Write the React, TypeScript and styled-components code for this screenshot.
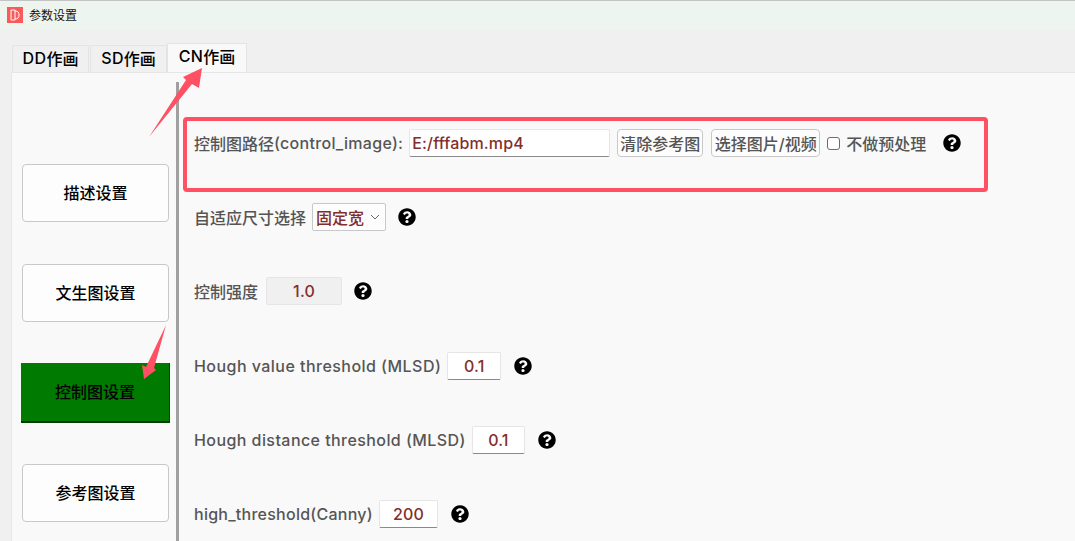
import React from "react";
import styled, { createGlobalStyle } from "styled-components";
import { FaQuestionCircle } from "react-icons/fa";

const GlobalStyle = createGlobalStyle`
  html, body {
    margin: 0;
    padding: 0;
    background: #f0f0f0;
  }
  * { box-sizing: border-box; }
`;

const FONT = `Inter, "Noto Sans CJK SC", sans-serif`;

const Page = styled.div`
  position: relative;
  width: 1075px;
  height: 541px;
  overflow: hidden;
  display: flex;
  flex-direction: column;
  font-family: ${FONT};
  background: #f0f0f0;
`;

const TitleBar = styled.div`
  height: 30px;
  flex: none;
  display: flex;
  align-items: center;
  gap: 6px;
  padding: 0 0 2px 7px;
  background: #eef5ee;
  border-top: 1px solid #c4c4c4;
  font-size: 12px;
  color: #111;
`;

const TabBar = styled.div`
  height: 42px;
  flex: none;
  display: flex;
  align-items: flex-end;
  gap: 1px;
  padding-left: 12px;
`;

const Tab = styled.div<{ $active?: boolean }>`
  height: ${(p) => (p.$active ? "29px" : "27px")};
  width: ${(p) => (p.$active ? "80px" : "77px")};
  margin-left: ${(p) => (p.$active ? "-1px" : "0")};
  display: flex;
  align-items: center;
  justify-content: center;
  padding-bottom: ${(p) => (p.$active ? "4px" : "3px")};
  font-size: 16px;
  font-weight: 500;
  color: #000;
  background: ${(p) => (p.$active ? "#f9f9f9" : "#f0f0f0")};
  border: 1px solid #e4e4e4;
  border-bottom: none;
`;

const Pane = styled.div`
  flex: 1;
  min-height: 0;
  margin-left: 11px;
  display: flex;
  background: #f9f9f9;
  border-left: 1px solid #e6e6e6;
  border-top: 1px solid #e6e6e6;
`;

const Sidebar = styled.div`
  width: 164px;
  flex: none;
  display: flex;
  flex-direction: column;
  gap: 42px;
  padding: 91px 0 0 10px;
`;

const NavButton = styled.div<{ $active?: boolean }>`
  height: 58px;
  width: 147px;
  flex: none;
  display: flex;
  align-items: center;
  justify-content: center;
  padding-bottom: 2px;
  font-size: 16px;
  font-weight: 500;
  color: #000;
  background: ${(p) => (p.$active ? "#007a00" : "#fdfdfd")};
  border: 1px solid #c8c8c8;
  border-radius: 4px;
  ${(p) =>
    p.$active &&
    `
    margin-left: -1px;
    width: 149px;
    height: 60px;
    margin-top: -1px;
    margin-bottom: -1px;
    border: none;
    border-radius: 0;
    border-right: 1px solid #004a00;
    border-bottom: 2px solid #003c00;
  `}
`;

const Splitter = styled.div`
  width: 3px;
  flex: none;
  margin-top: 9px;
  background: #a0a0a0;
`;

const Content = styled.div`
  flex: 1;
  padding: 56px 0 0 15px;
  display: flex;
  flex-direction: column;
  gap: 46.2px;
`;

const Row = styled.div`
  height: 28px;
  flex: none;
  display: flex;
  align-items: center;
  font-size: 16px;
  font-weight: 500;
  color: #555;
  white-space: nowrap;
`;

// latin text runs a bit wider than Inter in the source font
const Latin = styled.span<{ $track: number }>`
  letter-spacing: ${(p) => p.$track}px;
`;

const Field = styled.div<{ $width: number; $disabled?: boolean; $align?: string }>`
  width: ${(p) => p.$width}px;
  height: 28px;
  flex: none;
  margin-left: ${(p) => (p.$disabled ? 8 : 6)}px;
  display: flex;
  align-items: center;
  justify-content: ${(p) => p.$align ?? "center"};
  padding: 0 2px;
  font-size: 16px;
  font-weight: 500;
  letter-spacing: 0.15px;
  color: #842e2c;
  background: ${(p) => (p.$disabled ? "#f0f0f0" : "#fff")};
  border: 1px solid #e6e6e6;
  border-bottom: 1px solid ${(p) => (p.$disabled ? "#e6e6e6" : "#8a8a8a")};
  border-radius: 2px;
`;

const ActionButton = styled.div<{ $width: number; $gap: number }>`
  width: ${(p) => p.$width}px;
  height: 28px;
  flex: none;
  margin-left: ${(p) => p.$gap}px;
  display: flex;
  align-items: center;
  justify-content: center;
  font-size: 16px;
  font-weight: 500;
  color: #555;
  background: #fdfdfd;
  border: 1px solid #c8c8c8;
  border-radius: 4px;
`;

const Checkbox = styled.span`
  width: 13px;
  height: 13px;
  flex: none;
  margin: 0 6px 0 7px;
  background: #fff;
  border: 1px solid #6c6c6c;
  border-radius: 3px;
`;

const Select = styled.div`
  width: 74px;
  height: 28px;
  flex: none;
  margin-left: 6px;
  display: flex;
  align-items: center;
  justify-content: space-between;
  padding: 0 5px 0 3px;
  font-size: 16px;
  font-weight: 500;
  color: #842e2c;
  background: #fdfdfd;
  border: 1px solid #c8c8c8;
  border-radius: 2px;
`;

const Help = styled(FaQuestionCircle)<{ $gap: number }>`
  width: 18px;
  height: 18px;
  flex: none;
  margin-left: ${(p) => p.$gap}px;
  color: #000;
`;

const RedBox = styled.div`
  position: absolute;
  left: 183px;
  top: 117px;
  width: 805px;
  height: 75px;
  border: 4px solid #ff5064;
  border-radius: 4px;
  pointer-events: none;
`;

const Arrows = styled.svg`
  position: absolute;
  left: 0;
  top: 0;
  pointer-events: none;
`;

function Logo() {
  return (
    <svg width="16" height="16" viewBox="0 0 16 16">
      <rect width="16" height="16" fill="#fb5a5a" />
      <path d="M4 3h4v10H4z" fill="none" stroke="#fff" strokeWidth="1" />
      <path d="M8 4c3 0 4 1.5 4 4s-1 4-4 4" fill="none" stroke="#fff" strokeWidth="1" />
    </svg>
  );
}

export default function App() {
  return (
    <Page>
      <GlobalStyle />
      <TitleBar>
        <Logo />
        参数设置
      </TitleBar>
      <TabBar>
        <Tab><Latin $track={0.4}>DD</Latin>作画</Tab>
        <Tab><Latin $track={0.4}>SD</Latin>作画</Tab>
        <Tab $active><Latin $track={0.4}>CN</Latin>作画</Tab>
      </TabBar>
      <Pane>
        <Sidebar>
          <NavButton>描述设置</NavButton>
          <NavButton>文生图设置</NavButton>
          <NavButton $active>控制图设置</NavButton>
          <NavButton>参考图设置</NavButton>
        </Sidebar>
        <Splitter />
        <Content>
          <Row>
            控制图路径<Latin $track={0.3}>(control_image):</Latin>
            <Field $width={201} $align="flex-start">E:/fffabm.mp4</Field>
            <ActionButton $width={86} $gap={7}>清除参考图</ActionButton>
            <ActionButton $width={109} $gap={8}>选择图片/视频</ActionButton>
            <Checkbox />
            不做预处理
            <Help $gap={17} />
          </Row>
          <Row>
            自适应尺寸选择
            <Select>
              固定宽
              <svg width="10" height="6" viewBox="0 0 10 6">
                <path d="M1 1l4 4 4-4" fill="none" stroke="#666" strokeWidth="1" />
              </svg>
            </Select>
            <Help $gap={12} />
          </Row>
          <Row>
            控制强度
            <Field $width={76} $disabled>1.0</Field>
            <Help $gap={12} />
          </Row>
          <Row>
            <Latin $track={0.46}>Hough value threshold (MLSD)</Latin>
            <Field $width={54}>0.1</Field>
            <Help $gap={13} />
          </Row>
          <Row>
            <Latin $track={0.43}>Hough distance threshold (MLSD)</Latin>
            <Field $width={53}>0.1</Field>
            <Help $gap={13} />
          </Row>
          <Row>
            <Latin $track={0.25}>high_threshold(Canny)</Latin>
            <Field $width={59}>200</Field>
            <Help $gap={13} />
          </Row>
        </Content>
      </Pane>
      <RedBox />
      <Arrows width="1075" height="541" viewBox="0 0 1075 541">
        <polygon points="202,68 199,88 192,84 149,137 186,80 183,77" fill="#ff5064" />
        <polygon points="166,325 154,368 156,370 144,379 142,365 146,367" fill="#ff5064" />
      </Arrows>
    </Page>
  );
}
